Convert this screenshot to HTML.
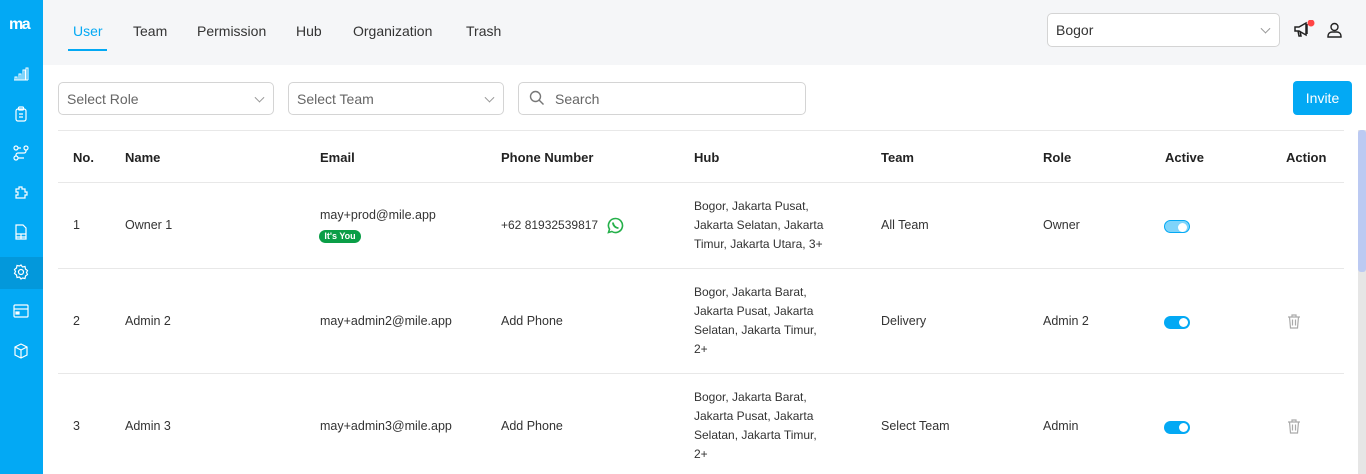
<!DOCTYPE html>
<html><head><meta charset="utf-8"><style>
*{box-sizing:border-box;margin:0;padding:0}
body{width:1366px;height:474px;overflow:hidden;font-family:"Liberation Sans",sans-serif;font-size:12.5px;color:#333;background:#fff;position:relative}
.sb{position:absolute;left:0;top:0;width:43px;height:474px;background:#03a9f4}
.sb .logo{position:absolute;left:9px;top:16px;color:#fff;font-weight:bold;font-size:16px;letter-spacing:-1.5px}
.sb svg{position:absolute;left:13px}
.act{position:absolute;left:0;top:257px;width:43px;height:32px;background:#0398db}
.hdr{position:absolute;left:43px;top:0;width:1323px;height:65px;background:#f5f6f8}
.tab{position:absolute;top:23px;font-size:14px;color:#333}
.sel{position:absolute;border:1px solid #d4d4d4;border-radius:5px;background:#fff;color:#666;font-size:14px;padding-left:8px;display:flex;align-items:center}
.chev{position:absolute;right:10px;top:50%;width:7px;height:7px;border-right:1px solid #999;border-bottom:1px solid #999;transform:translateY(-70%) rotate(45deg)}
.c{position:absolute;font-size:12.5px;color:#333}
.th{position:absolute;top:150px;font-weight:bold;font-size:13px;color:#222}
.line{position:absolute;left:58px;width:1286px;height:1px;background:#e8e8e8}
.tg{position:absolute;left:1164px;width:26px;height:13px;border-radius:7px;background:#03a9f4}
.tg::after{content:"";position:absolute;right:2px;top:2px;width:9px;height:9px;border-radius:50%;background:#fff}
.hub{position:absolute;left:694px;line-height:19px;font-size:12px;color:#333}
</style></head><body>
<div class="sb">
<div class="logo">ma</div>
<div class="act"></div>
<svg style="top:67px" width="16" height="14" viewBox="0 0 16 14" fill="none" stroke="#fff" stroke-width="1"><path d="M1 13h14M2 13V10h2v3M6 13V7h2v6M10 13V3h2v10M13 13V1h2v12"/></svg>
<svg style="top:106px" width="16" height="16" viewBox="0 0 16 16" fill="none" stroke="#fff" stroke-width="1.2"><rect x="3" y="3" width="10" height="12" rx="2"/><rect x="5.5" y="1" width="5" height="3" rx="1"/><path d="M6 8h4M6 11h4"/></svg>
<svg style="top:145px" width="16" height="16" viewBox="0 0 16 16" fill="none" stroke="#fff" stroke-width="1.2"><circle cx="3" cy="3" r="2"/><circle cx="13" cy="3" r="2"/><circle cx="3" cy="13" r="2"/><path d="M5 3h3M13 5v1a2 2 0 0 1-2 2H5a2 2 0 0 0-2 2v1M5 13h6"/></svg>
<svg style="top:185px" width="16" height="16" viewBox="0 0 16 16" fill="none" stroke="#fff" stroke-width="1.2"><path d="M3 4h3V2h3v2h3v3h2v3h-2v3H3v-3h2V7H3z"/></svg>
<svg style="top:224px" width="16" height="16" viewBox="0 0 16 16" fill="none" stroke="#fff" stroke-width="1.2"><path d="M3 1h7l3 3v11H3zM3 10h10M3 13h10M8 10v5"/></svg>
<svg style="top:264px" width="16" height="16" viewBox="0 0 16 16" fill="none" stroke="#fff" stroke-width="1.2"><circle cx="8" cy="8" r="2.5"/><path d="M8 1l1.5 2 2.5-.5.5 2.5 2 1.5-1 2 1 2-2 1.5-.5 2.5-2.5-.5L8 15l-1.5-2-2.5.5-.5-2.5-2-1.5 1-2-1-2 2-1.5.5-2.5 2.5.5z"/></svg>
<svg style="top:304px" width="16" height="14" viewBox="0 0 16 14" fill="none" stroke="#fff" stroke-width="1.2"><rect x="1" y="1" width="14" height="12" rx="1"/><path d="M1 5h14"/><rect x="3" y="8" width="3" height="2" fill="#fff"/></svg>
<svg style="top:343px" width="16" height="16" viewBox="0 0 16 16" fill="none" stroke="#fff" stroke-width="1.2"><path d="M8 1l6 3v8l-6 3-6-3V4zM2 4l6 3 6-3M8 7v8"/></svg>
</div>
<div class="hdr">
<div class="tab" style="left:30px;color:#03a9f4">User</div>
<div style="position:absolute;left:25px;top:49px;width:39px;height:2px;background:#03a9f4"></div>
<div class="tab" style="left:90px">Team</div>
<div class="tab" style="left:154px">Permission</div>
<div class="tab" style="left:253px">Hub</div>
<div class="tab" style="left:310px">Organization</div>
<div class="tab" style="left:423px">Trash</div>
</div>
<div class="sel" style="left:1047px;top:13px;width:233px;height:34px;color:#333;background:#fff">Bogor<span class="chev"></span></div>
<svg style="position:absolute;left:1293px;top:20px" width="22" height="20" viewBox="0 0 22 20" fill="none" stroke="#222" stroke-width="1.5"><path d="M2 7h4l7-4v12l-7-4H2zM5 11l1 5h2l-1-5M14 4v10"/><circle cx="18" cy="3" r="3.5" fill="#f44" stroke="none"/></svg>
<svg style="position:absolute;left:1327px;top:22px" width="15" height="16" viewBox="0 0 15 16" fill="none" stroke="#222" stroke-width="1.4"><circle cx="7.5" cy="5" r="3.5"/><path d="M1 15v-1a4 4 0 0 1 4-4h5a4 4 0 0 1 4 4v1z"/></svg>
<div class="sel" style="left:58px;top:82px;width:216px;height:33px">Select Role<span class="chev"></span></div>
<div class="sel" style="left:288px;top:82px;width:216px;height:33px">Select Team<span class="chev"></span></div>
<div class="sel" style="left:518px;top:82px;width:288px;height:33px;padding-left:36px">Search</div>
<svg style="position:absolute;left:529px;top:90px" width="16" height="16" viewBox="0 0 16 16" fill="none" stroke="#777" stroke-width="1.4"><circle cx="6.5" cy="6.5" r="5"/><path d="M10 10l4.5 4.5"/></svg>
<div style="position:absolute;left:1293px;top:81px;width:59px;height:34px;background:#03a9f4;border-radius:4px;color:#fff;font-size:14px;text-align:center;line-height:34px">Invite</div>
<div class="line" style="top:130px"></div>
<div class="th" style="left:73px">No.</div><div class="th" style="left:125px">Name</div><div class="th" style="left:320px">Email</div><div class="th" style="left:501px">Phone Number</div><div class="th" style="left:694px">Hub</div><div class="th" style="left:881px">Team</div><div class="th" style="left:1043px">Role</div><div class="th" style="left:1165px">Active</div><div class="th" style="left:1286px">Action</div>
<div class="line" style="top:182px"></div>
<div class="c" style="left:73px;top:218px">1</div><div class="c" style="left:125px;top:218px">Owner 1</div>
<div class="c" style="left:320px;top:208px">may+prod@mile.app</div>
<div style="position:absolute;left:319px;top:230px;width:42px;height:13px;border-radius:7px;background:#0a9e47;color:#fff;font-size:9px;font-weight:bold;text-align:center;line-height:13px">It's You</div>
<div class="c" style="left:501px;top:218px;font-size:12px">+62 81932539817</div>
<svg style="position:absolute;left:607px;top:217px" width="17" height="17" viewBox="0 0 17 17" fill="none" stroke="#25b04a" stroke-width="1.6"><path d="M8.5 1.5a7 7 0 1 1-3.6 13L1.5 15.5l1-3.3A7 7 0 0 1 8.5 1.5z"/><path d="M6 5.5c0 3 2.5 5.5 5.5 5.5" stroke-width="1.8"/></svg>
<div class="hub" style="top:197px">Bogor, Jakarta Pusat,<br>Jakarta Selatan, Jakarta<br>Timur, Jakarta Utara, 3+</div>
<div class="c" style="left:881px;top:218px">All Team</div><div class="c" style="left:1043px;top:218px">Owner</div>
<div class="tg" style="top:220px;background:#7fd4fa;border:1px solid #03a9f4"></div>
<div class="line" style="top:268px"></div>
<div class="c" style="left:73px;top:314px">2</div><div class="c" style="left:125px;top:314px">Admin 2</div><div class="c" style="left:320px;top:314px">may+admin2@mile.app</div><div class="c" style="left:501px;top:314px">Add Phone</div>
<div class="hub" style="top:283px">Bogor, Jakarta Barat,<br>Jakarta Pusat, Jakarta<br>Selatan, Jakarta Timur,<br>2+</div>
<div class="c" style="left:881px;top:314px">Delivery</div><div class="c" style="left:1043px;top:314px">Admin 2</div>
<div class="tg" style="top:316px"></div>
<svg style="position:absolute;left:1287px;top:314px" width="14" height="15" viewBox="0 0 14 15" fill="none" stroke="#aaa" stroke-width="1.2"><path d="M1 3h12M5 3V1h4v2M2.5 3l1 11h7l1-11M5.5 5.5v6M8.5 5.5v6"/></svg>
<div class="line" style="top:373px"></div>
<div class="c" style="left:73px;top:419px">3</div><div class="c" style="left:125px;top:419px">Admin 3</div><div class="c" style="left:320px;top:419px">may+admin3@mile.app</div><div class="c" style="left:501px;top:419px">Add Phone</div>
<div class="hub" style="top:388px">Bogor, Jakarta Barat,<br>Jakarta Pusat, Jakarta<br>Selatan, Jakarta Timur,<br>2+</div>
<div class="c" style="left:881px;top:419px">Select Team</div><div class="c" style="left:1043px;top:419px">Admin</div>
<div class="tg" style="top:421px"></div>
<svg style="position:absolute;left:1287px;top:419px" width="14" height="15" viewBox="0 0 14 15" fill="none" stroke="#aaa" stroke-width="1.2"><path d="M1 3h12M5 3V1h4v2M2.5 3l1 11h7l1-11M5.5 5.5v6M8.5 5.5v6"/></svg>
<div style="position:absolute;left:1358px;top:130px;width:8px;height:344px;background:#e6e6e6"></div>
<div style="position:absolute;left:1358px;top:130px;width:8px;height:142px;background:#bccaf2;border-radius:3px"></div>
</body></html>
